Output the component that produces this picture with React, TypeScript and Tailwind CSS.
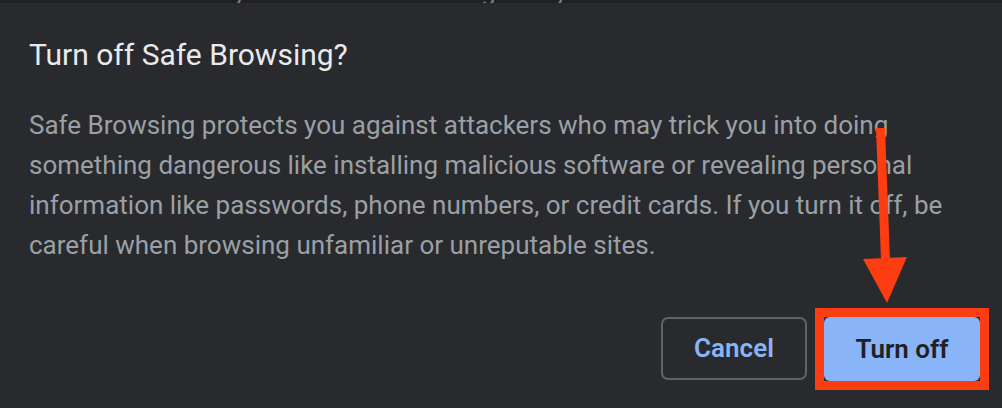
import React from 'react';

const App: React.FC = () => {
  return (
    <div
      className="relative w-[1002px] h-[408px] overflow-hidden bg-[#292a2d]"
      style={{ fontFamily: 'Roboto, "Liberation Sans", sans-serif' }}
    >
      {/* page behind the dialog, mostly covered */}
      <div className="h-[3px] overflow-hidden bg-[#1f2023]">
        <p className="-mt-[22px] pl-[22px] text-[26px] leading-[26px] text-[#7d8186] whitespace-nowrap">
          Network and safety and hardware settings for your device and browser
        </p>
      </div>

      <div className="pt-[34px] pl-[29px] pr-[22px]">
        <h1 className="text-[30px] leading-[36px] text-[#e8eaed]">Turn off Safe Browsing?</h1>

        <p className="mt-[32px] text-[26px] leading-[40px] text-[#9aa0a6] whitespace-nowrap">
          Safe Browsing protects you against attackers who may trick you into doing
          <br />
          something dangerous like installing malicious software or revealing personal
          <br />
          information like passwords, phone numbers, or credit cards. If you turn it off, be
          <br />
          careful when browsing unfamiliar or unreputable sites.
        </p>

        <div className="mt-[52px] flex justify-end gap-[17px]">
          <button className="h-[63px] w-[146px] rounded-[7px] border-2 border-[#5f6368] text-[26px] font-semibold text-[#8ab4f8]">
            Cancel
          </button>
          <div className="relative">
            <button className="h-[64px] w-[156px] rounded-[6px] bg-[#8ab4f8] text-[26px] font-semibold text-[#202124]">
              Turn off
            </button>
            <div className="absolute -inset-[9px] border-[9px] border-[#fc3d12]" />
          </div>
        </div>
      </div>

      {/* annotation arrow */}
      <svg className="absolute left-0 top-0" width="1002" height="408" viewBox="0 0 1002 408">
        <polygon points="876,128 885,128 890,260 881,260" fill="#fc3d12" />
        <polygon points="863,259 907,257 887,303" fill="#fc3d12" />
      </svg>
    </div>
  );
};

export default App;
